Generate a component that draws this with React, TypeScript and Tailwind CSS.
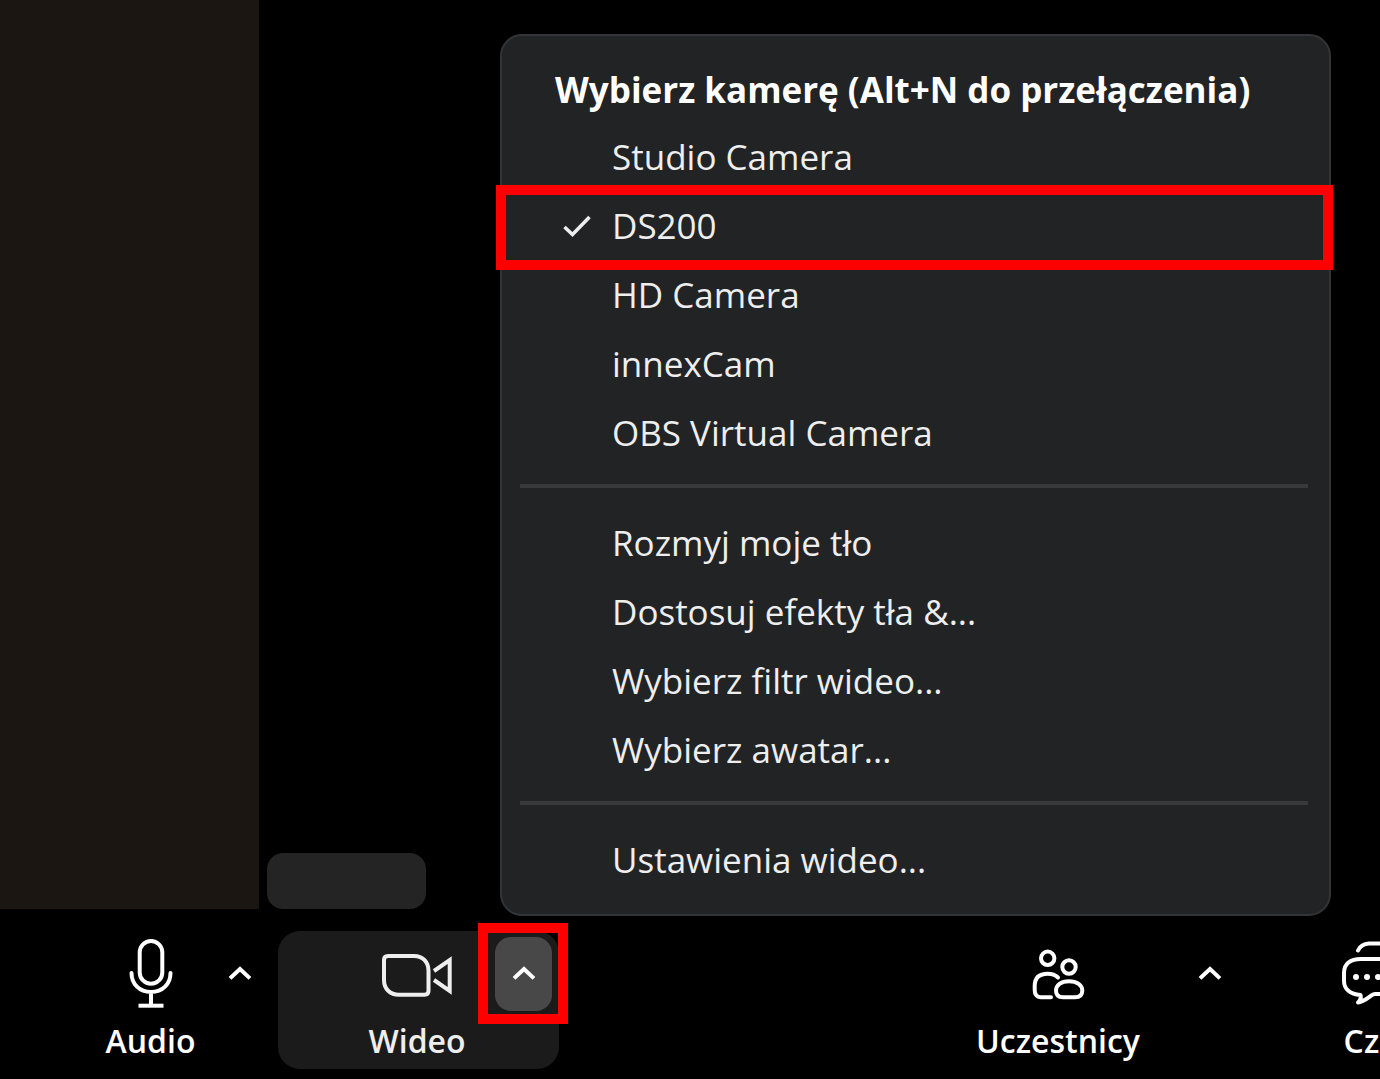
import React from "react";

const cameras = ["Studio Camera", "DS200", "HD Camera", "innexCam", "OBS Virtual Camera"];
const effects = ["Rozmyj moje tło", "Dostosuj efekty tła &...", "Wybierz filtr wideo...", "Wybierz awatar..."];

const stroke = {
  fill: "none",
  stroke: "currentColor",
  strokeWidth: 4,
  strokeLinecap: "round",
  strokeLinejoin: "round",
} as const;

function MicIcon() {
  return (
    <svg viewBox="0 0 52 80" className="h-20 w-[52px]" aria-hidden="true" {...stroke}>
      <rect x="14.7" y="10" width="22.6" height="42.7" rx="11.3" />
      <path d="M6.5 42C6.5 53 14.5 61 26 61S45.5 53 45.5 42M26 61V74" />
      <path d="M15.5 74.700H36.500" strokeLinecap="square" />
    </svg>
  );
}

function VideoIcon() {
  return (
    <svg viewBox="0 0 74 80" className="h-20 w-[74px]" aria-hidden="true" {...stroke}>
      <path d="M8 25H34C43 25 48.500 31 48.500 40V60Q48.500 63.700 44.500 63.700H19C10 63.700 4 58 4 49V29Q4 25 8 25Z" />
      <path d="M54 40L69.700 29V60L54 49" strokeLinejoin="miter" strokeLinecap="butt" />
    </svg>
  );
}

function PeopleIcon() {
  return (
    <svg viewBox="0 0 56 80" className="h-20 w-14" aria-hidden="true" {...stroke}>
      <circle cx="17.7" cy="27.3" r="6.7" />
      <circle cx="39" cy="36" r="6.7" />
      <path d="M21 66.300H11C6.500 66.300 4.700 63 4.700 59V55C4.700 46 10 42.700 17.700 42.700C22.500 42.700 25.500 44 28 46.500" />
      <path d="M39 50.300C47 50.300 52.300 54 52.300 59.500C52.300 64 49.500 66.300 45 66.300H33C28.500 66.300 26 64 26 59.500C26 54 31 50.300 39 50.300Z" />
    </svg>
  );
}

function ChatIcon() {
  return (
    <svg viewBox="0 0 72 80" className="h-20 w-[72px] shrink-0" aria-hidden="true" {...stroke}>
      <path d="M17 19.500C19 15 23 13 28 12.600H50C60 12.600 65 18 65 28V36C65 41 64 44 61 47" />
      <path d="M20 28H40C51 28 55 34 55 40V50C55 59 49 63 40 63H34C30 63 26 70 17 71.500C20 69 20 66 19.500 64C9 63 3 58 3 50V42C3 33 9 28 20 28Z" />
      <g fill="currentColor" stroke="none">
        <circle cx="15" cy="46" r="3" />
        <circle cx="26" cy="46" r="3" />
        <circle cx="37" cy="46" r="3" />
      </g>
    </svg>
  );
}

function ChevronUp() {
  return (
    <svg viewBox="0 0 24 16" className="h-4 w-6" aria-hidden="true" {...stroke}>
      <path d="M3.500 11L12 3L20.500 11" strokeLinejoin="miter" strokeLinecap="square" />
    </svg>
  );
}

function ToolButton({ label, className, children }: { label: string; className: string; children: React.ReactNode }) {
  return (
    <button type="button" className={`flex shrink-0 flex-col items-center self-start font-semibold ${className}`}>
      {children}
      <span className="text-[32px] leading-[60px] whitespace-nowrap">{label}</span>
    </button>
  );
}

function Expand({ label, className }: { label: string; className: string }) {
  return (
    <button
      type="button"
      aria-label={label}
      className={`mt-[6px] flex h-[74px] w-[57px] shrink-0 items-center justify-center rounded-2xl ${className}`}
    >
      <ChevronUp />
    </button>
  );
}

function MenuItem({ label, checked = false }: { label: string; checked?: boolean }) {
  return (
    <li role="none" className="relative">
      <button
        type="button"
        role="menuitemradio"
        aria-checked={checked}
        className="flex h-[69px] w-full items-center pl-[60px] text-left"
      >
        <span className="w-[50px]">
          {checked && (
            <svg viewBox="0 0 30 24" className="h-6 w-[30px]" aria-hidden="true" {...stroke} strokeWidth={3.5}>
              <path d="M2.500 12L10.500 19.500L27.500 2" strokeLinecap="butt" strokeLinejoin="miter" />
            </svg>
          )}
        </span>
        {label}
      </button>
      {checked && (
        <span className="pointer-events-none absolute -top-[7px] -right-1 -bottom-[9px] -left-[6px] border-10 border-[#ff0000]" />
      )}
    </li>
  );
}

function Divider() {
  return <li role="separator" className="mr-[21px] ml-[18px] mt-4 mb-[21px] h-1 bg-[#38393b]" />;
}

function CameraMenu() {
  return (
    <div className="absolute bottom-full left-[222px] mb-[15px] w-[831px] rounded-[22px] border-2 border-[#333437] bg-[#222325] pt-[18px] pb-[19px] text-[35px] text-[#eeeeee]">
      <h2 className="flex h-[69px] items-center pt-1 pl-[53px] font-bold whitespace-nowrap text-white">
        Wybierz kamerę (Alt+N do przełączenia)
      </h2>
      <ul role="menu" aria-label="Wideo">
        {cameras.map((name) => (
          <MenuItem key={name} label={name} checked={name === "DS200"} />
        ))}
        <Divider />
        {effects.map((name) => (
          <MenuItem key={name} label={name} />
        ))}
        <Divider />
        <MenuItem label="Ustawienia wideo..." />
      </ul>
    </div>
  );
}

export default function App() {
  return (
    <div className="flex min-h-screen flex-col overflow-hidden bg-black font-['Open_Sans','Noto_Sans',sans-serif] text-white">
      <main className="flex flex-1 gap-2">
        <section className="w-[259px] bg-[#1b1612]" />
        <div className="h-14 w-[159px] self-end rounded-2xl bg-[#242424]" />
      </main>
      <footer className="flex h-[170px] items-start pt-[22px]">
        <ToolButton label="Audio" className="ml-[90px] w-[121px]">
          <MicIcon />
        </ToolButton>
        <Expand label="Opcje audio" className="" />
        <div className="relative ml-[10px] flex h-[138px] w-[281px] shrink-0 rounded-[22px] bg-[#1b1b1b]">
          <ToolButton label="Wideo" className="ml-[69px] w-[140px] text-[#eeeeee]">
            <VideoIcon />
          </ToolButton>
          <div className="relative ml-2 self-start">
            <Expand label="Opcje wideo" className="bg-[#484848]" />
            <span className="pointer-events-none absolute -top-2 -right-4 -bottom-[13px] -left-[17px] border-10 border-[#ff0000]" />
          </div>
          <CameraMenu />
        </div>
        <ToolButton label="Uczestnicy" className="ml-auto w-[180px]">
          <PeopleIcon />
        </ToolButton>
        <Expand label="Opcje uczestników" className="ml-[33px]" />
        <div className="ml-[103px] w-[39px] shrink-0 overflow-hidden">
          <ToolButton label="Czat" className="w-[72px]">
            <ChatIcon />
          </ToolButton>
        </div>
      </footer>
    </div>
  );
}
